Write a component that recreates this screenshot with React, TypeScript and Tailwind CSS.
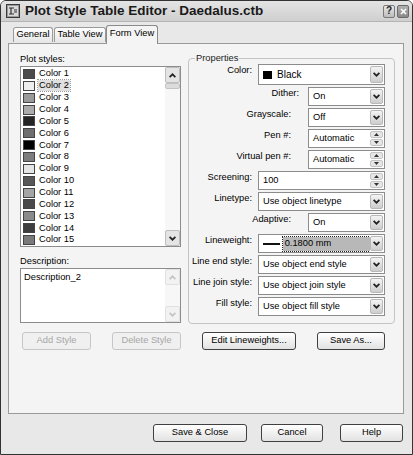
import React from "react";

const Chevron = ({ color = "#222" }: { color?: string }) => (
  <svg width="7" height="5" viewBox="0 0 7 5">
    <path d="M0.6 0.8 L3.5 3.7 L6.4 0.8" stroke={color} strokeWidth="1.7" fill="none" />
  </svg>
);

const ChevronUp = ({ color = "#222" }: { color?: string }) => (
  <svg width="7" height="5" viewBox="0 0 7 5">
    <path d="M0.6 4.2 L3.5 1.3 L6.4 4.2" stroke={color} strokeWidth="1.7" fill="none" />
  </svg>
);

function DropBtn() {
  return (
    <div className="w-[13px] my-[1px] mr-[1px] rounded-[2px] border border-[#b8b8b8] bg-linear-to-b from-[#f4f4f4] to-[#cdcdcd] flex items-center justify-center">
      <Chevron />
    </div>
  );
}

function SpinBtn() {
  return (
    <div className="w-[13px] my-[1px] mr-[1px] flex flex-col gap-[1px]">
      <div className="flex-1 rounded-[2px] border border-[#c4c4c4] bg-[#e6e6e6] flex items-center justify-center">
        <svg width="5" height="3" viewBox="0 0 5 3">
          <path d="M0 3 L2.5 0 L5 3 Z" fill="#333" />
        </svg>
      </div>
      <div className="flex-1 rounded-[2px] border border-[#c4c4c4] bg-[#e6e6e6] flex items-center justify-center">
        <svg width="5" height="3" viewBox="0 0 5 3">
          <path d="M0 0 L2.5 3 L5 0 Z" fill="#333" />
        </svg>
      </div>
    </div>
  );
}

function Field({
  w,
  spin,
  children,
}: {
  w: string;
  spin?: boolean;
  children: React.ReactNode;
}) {
  return (
    <div className={`${w} h-full bg-white border border-[#8c8c8c] flex items-stretch`}>
      <div className="flex-1 flex items-center pl-[3px] overflow-hidden whitespace-nowrap">{children}</div>
      {spin ? <SpinBtn /> : <DropBtn />}
    </div>
  );
}

function Btn({
  w,
  disabled,
  children,
}: {
  w: string;
  disabled?: boolean;
  children: React.ReactNode;
}) {
  return (
    <div
      className={`${w} h-[18px] rounded-[3px] border flex items-center justify-center ${
        disabled
          ? "border-[#c6c6c6] text-[#a6a6a6] bg-[#f0f0f0]"
          : "border-[#404040] text-black bg-linear-to-b from-[#ffffff] to-[#e2e2e2]"
      }`}
    >
      {children}
    </div>
  );
}

function ScrollBar({ disabled }: { disabled?: boolean }) {
  const c = disabled ? "#c4c4c4" : "#222";
  return (
    <div className="w-[15px] flex flex-col bg-[#f7f7f7]">
      <div
        className={`h-[16px] rounded-[2px] border flex items-center justify-center ${
          disabled ? "border-[#e0e0e0] bg-[#f2f2f2]" : "border-[#bdbdbd] bg-[#e4e4e4]"
        }`}
      >
        <ChevronUp color={c} />
      </div>
      {!disabled && <div className="h-[6px] rounded-[2px] border border-[#c4c4c4] bg-[#dcdcdc]" />}
      <div className="flex-1" />
      <div
        className={`h-[16px] rounded-[2px] border flex items-center justify-center ${
          disabled ? "border-[#e0e0e0] bg-[#f2f2f2]" : "border-[#bdbdbd] bg-[#e4e4e4]"
        }`}
      >
        <Chevron color={c} />
      </div>
    </div>
  );
}

const swatches = [
  "#4b4b4b",
  "#eeeeee",
  "#9a9a9a",
  "#ababab",
  "#252525",
  "#6e6e6e",
  "#000000",
  "#7d7d7d",
  "#e5e5e5",
  "#575757",
  "#a5a5a5",
  "#4a4a4a",
  "#8a8a8a",
  "#3e3e3e",
  "#7a7a7a",
];

function Row({
  label,
  gap,
  h = "h-[19px]",
  children,
}: {
  label: string;
  gap: string;
  h?: string;
  children: React.ReactNode;
}) {
  return (
    <div className={`flex ${h} justify-end items-start pr-[9px]`}>
      <span className={`${gap} leading-[11px] pt-[1px] whitespace-nowrap`}>{label}</span>
      {children}
    </div>
  );
}

export default function App() {
  return (
    <div className="w-[413px] h-[455px] bg-[#e8e8e8] border border-[#333333] rounded-t-[6px] flex flex-col overflow-hidden font-['Liberation_Sans',Arial,sans-serif] text-[9.3px] text-black">
      {/* Title bar */}
      <div className="h-[21px] flex items-center pl-[5px] pr-[3px] bg-linear-to-b from-[#e4e4e4] to-[#cfcfcf] border-b border-[#b4b4b4]">
        <svg width="14" height="14" viewBox="0 0 14 14">
          <rect x="0.5" y="0.5" width="13" height="13" fill="#9a9a9a" stroke="#3a3a3a" />
          <rect x="2" y="2" width="10" height="10" fill="#d8d8d8" />
          <path d="M3 4 H8 M5 4 V10 M3 10 H8 M8 6 H11 M8 8 H11" stroke="#333" strokeWidth="1.2" />
        </svg>
        <span className="ml-[5px] text-[13.5px] font-bold leading-[14px] text-[#1a1a1a]">
          Plot Style Table Editor - Daedalus.ctb
        </span>
        <div className="flex-1" />
        <div className="w-[12px] h-[13px] rounded-[2px] border border-[#7a7a7a] bg-linear-to-b from-[#e8e8e8] to-[#bcbcbc] flex items-center justify-center text-[10px] font-bold leading-none text-[#222]">
          ?
        </div>
        <div className="ml-[2px] w-[12px] h-[13px] rounded-[2px] border border-[#6a6a6a] bg-linear-to-b from-[#b0b0b0] to-[#8a8a8a] flex items-center justify-center">
          <svg width="7" height="7" viewBox="0 0 7 7">
            <path d="M1 1 L6 6 M6 1 L1 6" stroke="#fff" strokeWidth="1.6" />
          </svg>
        </div>
      </div>

      {/* Body */}
      <div className="flex flex-col pl-[7px] pr-[8px]">
        {/* Tabs */}
        <div className="mt-[3px] h-[18px] flex items-end pl-[5px] relative z-10">
          <div className="w-[40px] h-[15px] mb-px rounded-t-[3px] border border-[#9a9a9a] border-b-0 bg-linear-to-b from-[#ffffff] to-[#e6e6e6] flex items-center justify-center">
            General
          </div>
          <div className="w-[52px] h-[15px] mb-px ml-px rounded-t-[3px] border border-[#9a9a9a] border-b-0 bg-linear-to-b from-[#ffffff] to-[#e6e6e6] flex items-center justify-center">
            Table View
          </div>
          <div className="w-[52px] h-[19px] -mb-px rounded-t-[3px] border border-[#8a8a8a] border-b-0 bg-[#f4f4f4] flex items-center justify-center pb-[2px]">
            Form View
          </div>
        </div>

        {/* Panel */}
        <div className="h-[371px] border border-[#9a9a9a] bg-[#f4f4f4] flex pl-[11px] pr-[8px]">
          {/* Left column */}
          <div className="w-[161px] flex flex-col pt-[9px]">
            <div className="h-[13px] leading-[13px]">Plot styles:</div>
            <div className="h-[181px] bg-white border border-[#8c8c8c] flex">
              <div className="flex-1 flex flex-col pt-[1px] pl-[2px]">
                {swatches.map((c, i) => (
                  <div key={i} className="h-[12px] flex items-center">
                    <div className="w-[12px] h-[10px] border border-[#444444]" style={{ backgroundColor: c }} />
                    <span
                      className={`ml-[3px] px-[1px] leading-[11px] ${
                        i === 1 ? "bg-[#e0e0e0] outline outline-dotted outline-[#9a9a9a]" : ""
                      }`}
                    >
                      Color {i + 1}
                    </span>
                  </div>
                ))}
              </div>
              <ScrollBar />
            </div>
            <div className="mt-[8px] h-[13px] leading-[13px]">Description:</div>
            <div className="h-[55px] bg-white border border-[#8c8c8c] flex">
              <div className="flex-1 pl-[3px] pt-[3px] leading-[11px]">Description_2</div>
              <ScrollBar disabled />
            </div>
            <div className="mt-[9px] flex justify-between pl-[2px]">
              <Btn w="w-[69px]" disabled>
                Add Style
              </Btn>
              <Btn w="w-[69px]" disabled>
                Delete Style
              </Btn>
            </div>
          </div>

          {/* Right column */}
          <div className="ml-[7px] w-[207px] flex flex-col pt-[8px]">
            <fieldset className="border border-[#c4c4c4] rounded-[4px] pb-[7px]">
              <legend className="ml-[6px] px-[1px] leading-[12px] text-[#222]">Properties</legend>
              <div className="flex flex-col gap-[2px]">
                <Row label="Color:" gap="mr-[6px]" h="h-[21px]">
                  <Field w="w-[127px]">
                    <div className="w-[9px] h-[8px] bg-black mr-[5px] ml-[1px]" />
                    <span className="text-[10px]">Black</span>
                  </Field>
                </Row>
                <Row label="Dither:" gap="mr-[9px]">
                  <Field w="w-[77px]">
                    <span className="pl-[1px]">On</span>
                  </Field>
                </Row>
                <Row label="Grayscale:" gap="mr-[17px]">
                  <Field w="w-[77px]">
                    <span className="pl-[1px]">Off</span>
                  </Field>
                </Row>
                <Row label="Pen #:" gap="mr-[17px]">
                  <Field w="w-[77px]" spin>
                    <span className="pl-[1px]">Automatic</span>
                  </Field>
                </Row>
                <Row label="Virtual pen #:" gap="mr-[17px]">
                  <Field w="w-[77px]" spin>
                    <span className="pl-[1px]">Automatic</span>
                  </Field>
                </Row>
                <Row label="Screening:" gap="mr-[6px]">
                  <Field w="w-[127px]" spin>
                    <span className="pl-[1px]">100</span>
                  </Field>
                </Row>
                <Row label="Linetype:" gap="mr-[6px]">
                  <Field w="w-[127px]">
                    <span className="pl-[1px]">Use object linetype</span>
                  </Field>
                </Row>
                <Row label="Adaptive:" gap="mr-[17px]">
                  <Field w="w-[77px]">
                    <span className="pl-[1px]">On</span>
                  </Field>
                </Row>
                <Row label="Lineweight:" gap="mr-[6px]">
                  <Field w="w-[127px]">
                    <div className="w-[17px] h-[2px] bg-[#111] ml-[1px] mr-[3px]" />
                    <div className="w-[89px] h-[14px] bg-[#b8b8b8] outline outline-dotted outline-[#222] flex items-center pl-[2px]">
                      0.1800 mm
                    </div>
                  </Field>
                </Row>
                <Row label="Line end style:" gap="mr-[6px]">
                  <Field w="w-[127px]">
                    <span className="pl-[1px]">Use object end style</span>
                  </Field>
                </Row>
                <Row label="Line join style:" gap="mr-[6px]">
                  <Field w="w-[127px]">
                    <span className="pl-[1px]">Use object join style</span>
                  </Field>
                </Row>
                <Row label="Fill style:" gap="mr-[6px]">
                  <Field w="w-[127px]">
                    <span className="pl-[1px]">Use object fill style</span>
                  </Field>
                </Row>
              </div>
            </fieldset>
            <div className="mt-[8px] flex pl-[14px] gap-[21px]">
              <Btn w="w-[94px]">Edit Lineweights...</Btn>
              <Btn w="w-[68px]">Save As...</Btn>
            </div>
          </div>
        </div>

        {/* Bottom buttons */}
        <div className="mt-[10px] flex justify-end pr-[1px]">
          <Btn w="w-[94px]">Save &amp; Close</Btn>
          <div className="ml-[14px]">
            <Btn w="w-[62px]">Cancel</Btn>
          </div>
          <div className="ml-[17px]">
            <Btn w="w-[63px]">Help</Btn>
          </div>
        </div>
      </div>
    </div>
  );
}
